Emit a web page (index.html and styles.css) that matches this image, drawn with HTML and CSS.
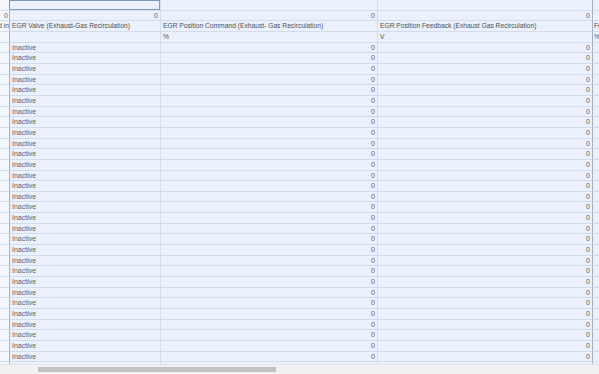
FILE: index.html
```html
<!DOCTYPE html>
<html>
<head>
<meta charset="utf-8">
<link rel="stylesheet" href="styles.css">
</head>
<body>
<div class="sheet">
  <div class="rows">
    <div class="row"><div class="c c1"></div><div class="c c2 sel"></div><div class="c c3"></div><div class="c c4"></div><div class="c c5"></div></div>
    <div class="row"><div class="c c1 num">0</div><div class="c c2 num">0</div><div class="c c3 num">0</div><div class="c c4 num">0</div><div class="c c5"></div></div>
    <div class="row head"><div class="c c1 clip"><span>Engine Speed in</span></div><div class="c c2">EGR Valve (Exhaust-Gas Recirculation)</div><div class="c c3">EGR Position Command (Exhaust- Gas Recirculation)</div><div class="c c4">EGR Position Feedback (Exhaust Gas Recirculation)</div><div class="c c5">Fe</div></div>
    <div class="row head"><div class="c c1"></div><div class="c c2"></div><div class="c c3">%</div><div class="c c4">V</div><div class="c c5">%</div></div>
    <div class="row"><div class="c c1"></div><div class="c c2">Inactive</div><div class="c c3 num">0</div><div class="c c4 num">0</div><div class="c c5"></div></div>
    <div class="row"><div class="c c1"></div><div class="c c2">Inactive</div><div class="c c3 num">0</div><div class="c c4 num">0</div><div class="c c5"></div></div>
    <div class="row"><div class="c c1"></div><div class="c c2">Inactive</div><div class="c c3 num">0</div><div class="c c4 num">0</div><div class="c c5"></div></div>
    <div class="row"><div class="c c1"></div><div class="c c2">Inactive</div><div class="c c3 num">0</div><div class="c c4 num">0</div><div class="c c5"></div></div>
    <div class="row"><div class="c c1"></div><div class="c c2">Inactive</div><div class="c c3 num">0</div><div class="c c4 num">0</div><div class="c c5"></div></div>
    <div class="row"><div class="c c1"></div><div class="c c2">Inactive</div><div class="c c3 num">0</div><div class="c c4 num">0</div><div class="c c5"></div></div>
    <div class="row"><div class="c c1"></div><div class="c c2">Inactive</div><div class="c c3 num">0</div><div class="c c4 num">0</div><div class="c c5"></div></div>
    <div class="row"><div class="c c1"></div><div class="c c2">Inactive</div><div class="c c3 num">0</div><div class="c c4 num">0</div><div class="c c5"></div></div>
    <div class="row"><div class="c c1"></div><div class="c c2">Inactive</div><div class="c c3 num">0</div><div class="c c4 num">0</div><div class="c c5"></div></div>
    <div class="row"><div class="c c1"></div><div class="c c2">Inactive</div><div class="c c3 num">0</div><div class="c c4 num">0</div><div class="c c5"></div></div>
    <div class="row"><div class="c c1"></div><div class="c c2">Inactive</div><div class="c c3 num">0</div><div class="c c4 num">0</div><div class="c c5"></div></div>
    <div class="row"><div class="c c1"></div><div class="c c2">Inactive</div><div class="c c3 num">0</div><div class="c c4 num">0</div><div class="c c5"></div></div>
    <div class="row"><div class="c c1"></div><div class="c c2">Inactive</div><div class="c c3 num">0</div><div class="c c4 num">0</div><div class="c c5"></div></div>
    <div class="row"><div class="c c1"></div><div class="c c2">Inactive</div><div class="c c3 num">0</div><div class="c c4 num">0</div><div class="c c5"></div></div>
    <div class="row"><div class="c c1"></div><div class="c c2">Inactive</div><div class="c c3 num">0</div><div class="c c4 num">0</div><div class="c c5"></div></div>
    <div class="row"><div class="c c1"></div><div class="c c2">Inactive</div><div class="c c3 num">0</div><div class="c c4 num">0</div><div class="c c5"></div></div>
    <div class="row"><div class="c c1"></div><div class="c c2">Inactive</div><div class="c c3 num">0</div><div class="c c4 num">0</div><div class="c c5"></div></div>
    <div class="row"><div class="c c1"></div><div class="c c2">Inactive</div><div class="c c3 num">0</div><div class="c c4 num">0</div><div class="c c5"></div></div>
    <div class="row"><div class="c c1"></div><div class="c c2">Inactive</div><div class="c c3 num">0</div><div class="c c4 num">0</div><div class="c c5"></div></div>
    <div class="row"><div class="c c1"></div><div class="c c2">Inactive</div><div class="c c3 num">0</div><div class="c c4 num">0</div><div class="c c5"></div></div>
    <div class="row"><div class="c c1"></div><div class="c c2">Inactive</div><div class="c c3 num">0</div><div class="c c4 num">0</div><div class="c c5"></div></div>
    <div class="row"><div class="c c1"></div><div class="c c2">Inactive</div><div class="c c3 num">0</div><div class="c c4 num">0</div><div class="c c5"></div></div>
    <div class="row"><div class="c c1"></div><div class="c c2">Inactive</div><div class="c c3 num">0</div><div class="c c4 num">0</div><div class="c c5"></div></div>
    <div class="row"><div class="c c1"></div><div class="c c2">Inactive</div><div class="c c3 num">0</div><div class="c c4 num">0</div><div class="c c5"></div></div>
    <div class="row"><div class="c c1"></div><div class="c c2">Inactive</div><div class="c c3 num">0</div><div class="c c4 num">0</div><div class="c c5"></div></div>
    <div class="row"><div class="c c1"></div><div class="c c2">Inactive</div><div class="c c3 num">0</div><div class="c c4 num">0</div><div class="c c5"></div></div>
    <div class="row"><div class="c c1"></div><div class="c c2">Inactive</div><div class="c c3 num">0</div><div class="c c4 num">0</div><div class="c c5"></div></div>
    <div class="row"><div class="c c1"></div><div class="c c2">Inactive</div><div class="c c3 num">0</div><div class="c c4 num">0</div><div class="c c5"></div></div>
    <div class="row"><div class="c c1"></div><div class="c c2">Inactive</div><div class="c c3 num">0</div><div class="c c4 num">0</div><div class="c c5"></div></div>
    <div class="row"><div class="c c1"></div><div class="c c2">Inactive</div><div class="c c3 num">0</div><div class="c c4 num">0</div><div class="c c5"></div></div>
    <div class="row"><div class="c c1"></div><div class="c c2">Inactive</div><div class="c c3 num">0</div><div class="c c4 num">0</div><div class="c c5"></div></div>
  </div>
  <div class="hscroll"><div class="thumb"></div></div>
</div>
</body>
</html>
```

FILE: styles.css
```css
html, body {
  margin: 0;
  padding: 0;
  background: #ffffff;
}
body {
  width: 599px;
  height: 374px;
  overflow: hidden;
  font-family: "Liberation Sans", Arial, sans-serif;
  font-size: 7px;
  color: #636363;
}
.sheet {
  display: flex;
  flex-direction: column;
  height: 374px;
}
.rows {
  height: 364px;
  overflow: hidden;
  background: #eaf0fc;
}
.row {
  display: grid;
  grid-template-columns: 10px 151px 217px 215px 1fr;
  height: 10.667px;
}
.c {
  box-sizing: border-box;
  border-right: 1px solid #d3dcea;
  border-bottom: 1px solid #d3dcea;
  padding: 0 2px;
  line-height: 9.6px;
  white-space: nowrap;
  overflow: hidden;
}
.c1 {
  background: #f4f7fd;
  border-right-color: #9fb2c6;
  padding: 0 1px;
}
.c4 {
  border-right-color: #9fb2c6;
}
.c5 {
  border-right: none;
  padding-left: 1px;
}
.num {
  text-align: right;
}
.clip {
  display: flex;
  justify-content: flex-end;
  padding: 0;
}
.head .c {
  color: #505050;
  font-size: 6.7px;
}
.sel {
  box-shadow: inset 0 0 0 1px #7d9ab6;
  border-left: none;
  margin-left: -1px;
}
.hscroll {
  height: 10px;
  background: #f1f1f1;
  border-top: 1px solid #e4e4e4;
  box-sizing: border-box;
  display: flex;
  align-items: center;
  padding-left: 38px;
}
.thumb {
  width: 238px;
  height: 5px;
  background: #c1c1c1;
}
```
